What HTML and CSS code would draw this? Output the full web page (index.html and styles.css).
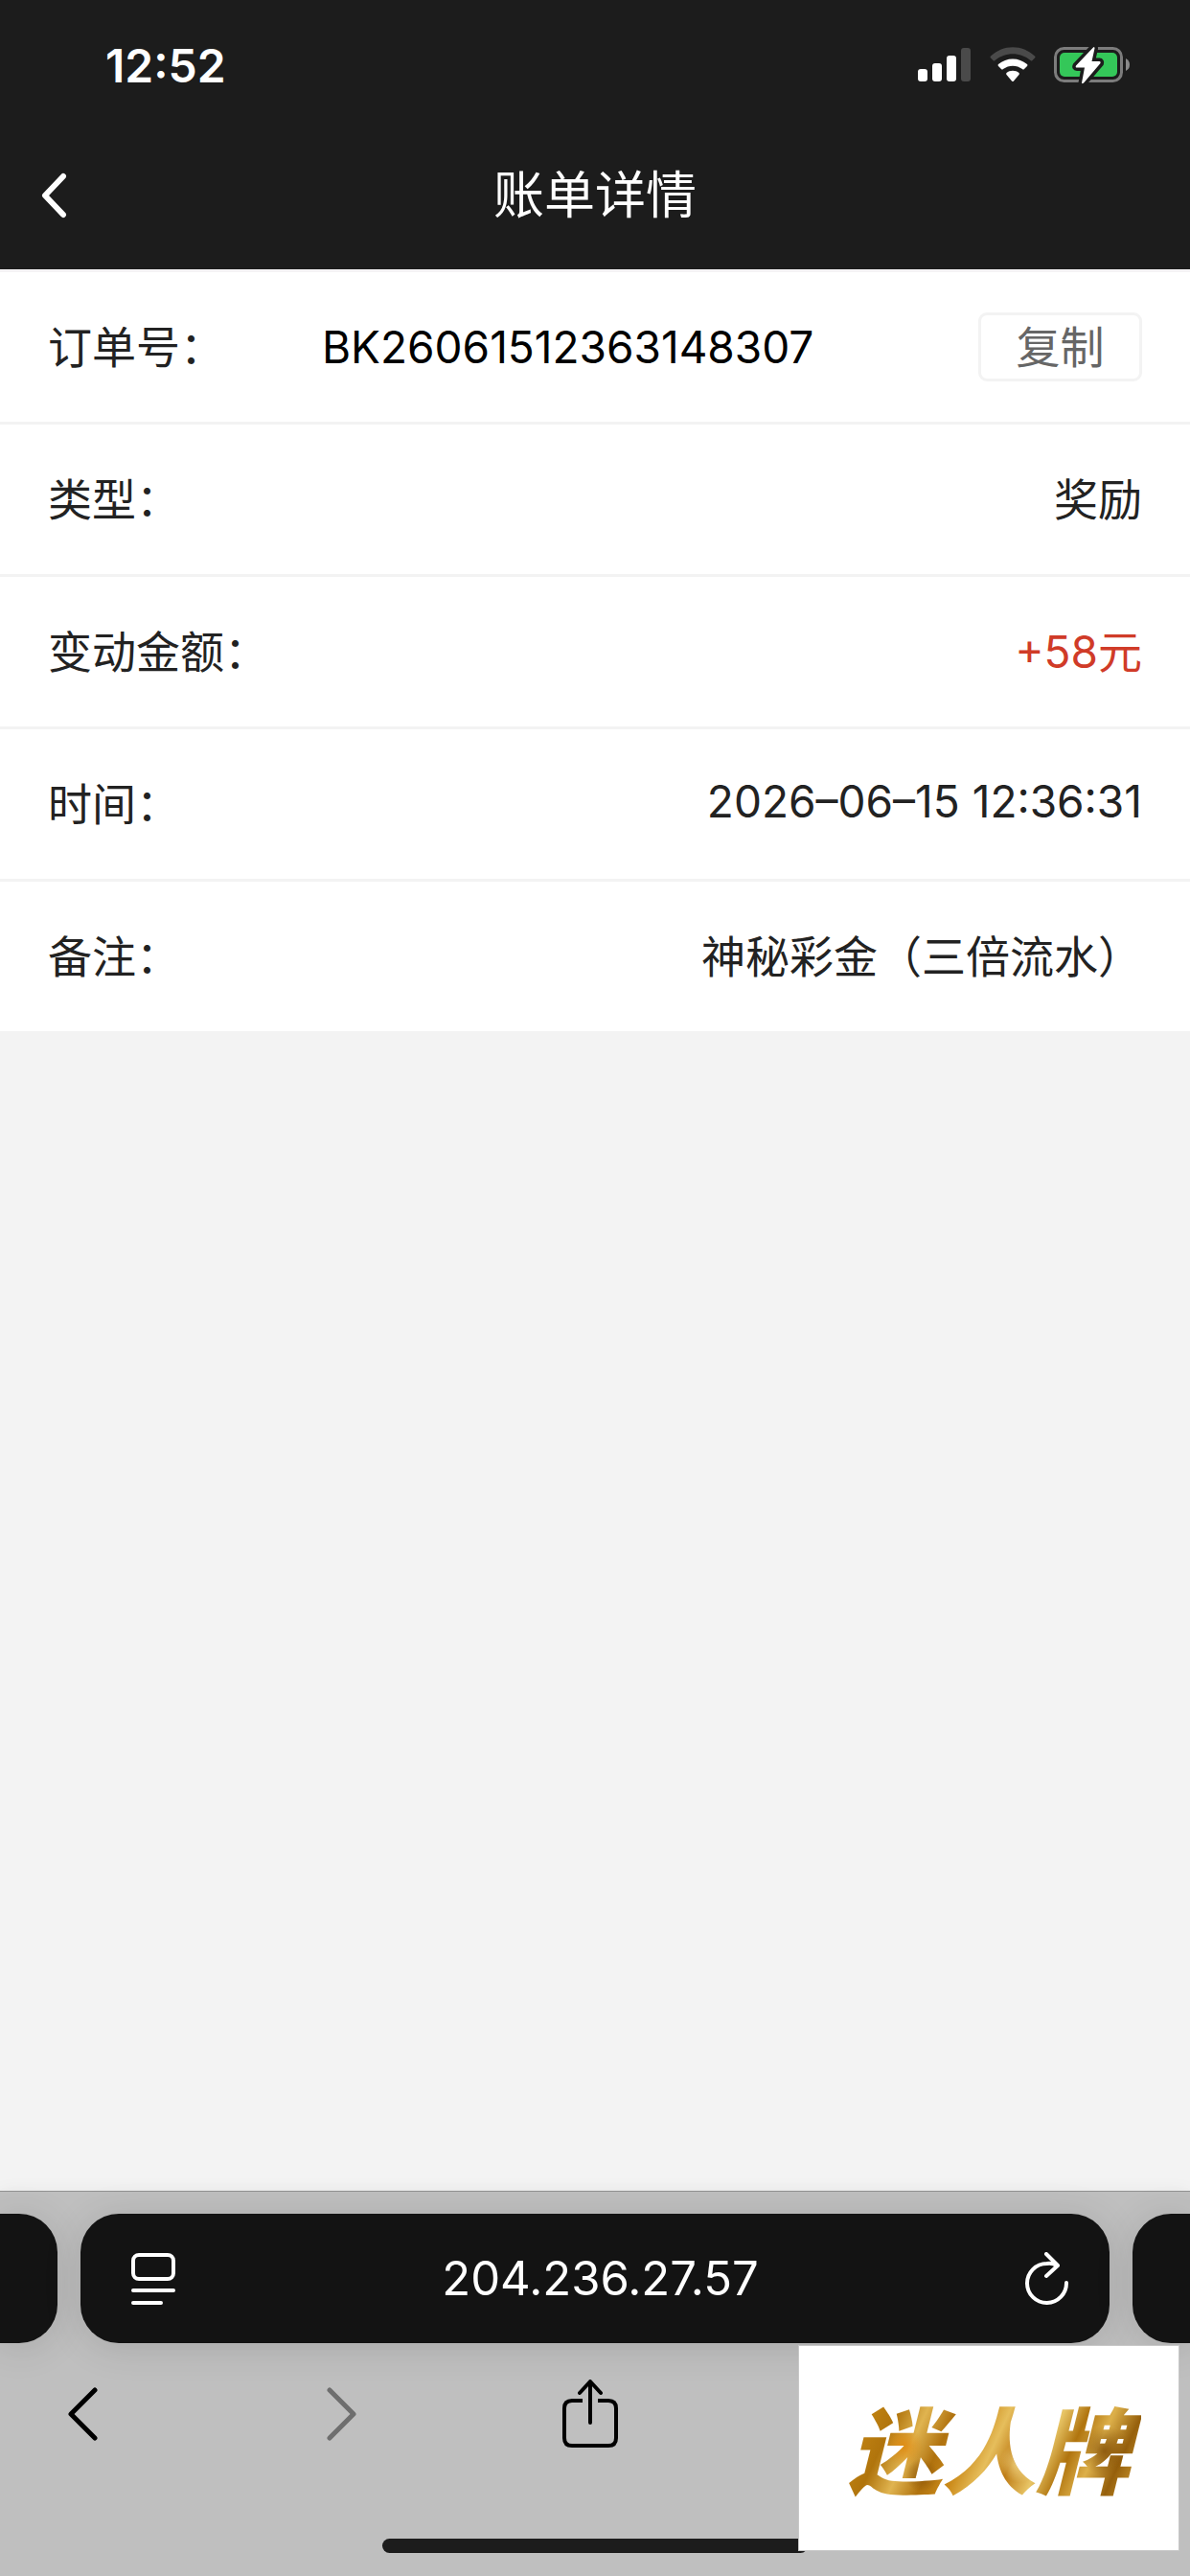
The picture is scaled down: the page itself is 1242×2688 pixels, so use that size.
FILE: index.html
```html
<!DOCTYPE html>
<html lang="zh-CN">
<head>
    <meta charset="UTF-8">
    <meta name="viewport" content="width=device-width, initial-scale=1.0">
    <title>账单详情</title>
    <link rel="stylesheet" href="styles.css">
</head>
<body>
    <!-- Status Bar -->
    <div class="status-bar">
        <span class="clock">12:52</span>
        <div class="status-icons">
            <svg width="56" height="40" viewBox="0 0 56 40" fill="#fff">
                <rect x="0" y="24" width="10" height="13" rx="3"/>
                <rect x="15" y="18" width="10" height="19" rx="3"/>
                <rect x="30" y="10" width="10" height="27" rx="3"/>
                <rect x="45" y="2" width="10" height="35" rx="3" fill="#4a4a4a"/>
            </svg>
            <svg width="48" height="40" viewBox="0 0 48 40" fill="#fff">
                <path d="M1 10.5C14-2 34-2 47 10.5Q48 11.500 47 12.500L44.500 15Q43.500 16 42.500 15C32 6 16 6 5.500 15Q4.500 16 3.500 15L1 12.500Q0 11.500 1 10.500Z" fill="#4a4a4a"/>
                <path d="M9 19C17.500 11.500 30.500 11.500 39 19Q40 20 39 21L36 24Q35 25 34 24C28 19.500 20 19.500 14 24Q13 25 12 24L9 21Q8 20 9 19Z"/>
                <path d="M17.500 28C21 25 27 25 30.500 28Q31.300 29 30.500 30L25 36.500Q24 37.500 23 36.500L17.500 30Q16.700 29 17.500 28Z"/>
            </svg>
            <svg width="80" height="40" viewBox="0 0 80 40">
                <rect x="1.500" y="2.500" width="69" height="34" rx="9" fill="none" stroke="#7c7c7c" stroke-width="3"/>
                <path d="M75 13Q79 15 79 19.500T75 26Z" fill="#8a8a8a"/>
                <rect x="6" y="7" width="60" height="25" rx="5" fill="#34c759"/>
                <path d="M41 1.500L23 20.500Q22 22.500 24 22.500H32L29 38.500Q30 40 31.500 38L48.500 18Q49 16 47.500 16H39.500L42.500 2.500Q42.500 0 41 1.500Z" fill="#fff" stroke="#1c1c1c" stroke-width="7" paint-order="stroke"/>
            </svg>
        </div>
    </div>

    <!-- Page Header -->
    <header class="header">
        <button class="back-button" aria-label="返回">
            <svg width="28" height="48" viewBox="0 0 28 48" fill="none" stroke="#fff" stroke-width="6" stroke-linecap="round" stroke-linejoin="round">
                <path d="M24 4L5 24L24 44"/>
            </svg>
        </button>
        <h1>账单详情</h1>
    </header>

    <!-- Bill Details -->
    <main class="content">
        <dl class="detail-list">
            <div class="detail-row order-row">
                <dt>订单号：</dt>
                <dd class="order-number">BK26061512363148307</dd>
                <dd><button class="copy-button">复制</button></dd>
            </div>
            <div class="detail-row">
                <dt>类型：</dt>
                <dd>奖励</dd>
            </div>
            <div class="detail-row">
                <dt>变动金额：</dt>
                <dd class="amount">+58元</dd>
            </div>
            <div class="detail-row">
                <dt>时间：</dt>
                <dd>2026–06–15 12:36:31</dd>
            </div>
            <div class="detail-row">
                <dt>备注：</dt>
                <dd>神秘彩金（三倍流水）</dd>
            </div>
        </dl>
    </main>

    <!-- Browser Bar -->
    <footer class="browser-bar">
        <div class="tabs">
            <div class="tab-edge tab-prev"></div>
            <div class="address-bar">
                <button aria-label="页面菜单">
                    <svg width="46" height="56" viewBox="0 0 46 56" fill="none" stroke="#fff" stroke-width="4" stroke-linecap="round">
                        <rect x="2" y="3" width="42" height="25" rx="6"/>
                        <path d="M2 40H44M2 53H31"/>
                    </svg>
                </button>
                <input type="text" value="204.236.27.57" aria-label="地址">
                <button aria-label="重新载入">
                    <svg width="46" height="56" viewBox="0 0 46 56" fill="none" stroke="#fff" stroke-width="4" stroke-linecap="round" stroke-linejoin="round">
                        <path d="M43 32A20.500 20.500 0 1 1 22.500 12Q28 11 33 14M22 2L34 14L22 25"/>
                    </svg>
                </button>
            </div>
            <div class="tab-edge tab-next"></div>
        </div>
        <nav class="toolbar">
            <button aria-label="后退">
                <svg width="32" height="56" viewBox="0 0 32 56" fill="none" stroke="#000" stroke-width="5" stroke-linecap="round" stroke-linejoin="round">
                    <path d="M28 3L3 28L28 53"/>
                </svg>
            </button>
            <button aria-label="前进" disabled>
                <svg width="32" height="56" viewBox="0 0 32 56" fill="none" stroke="#6e6e6e" stroke-width="5" stroke-linecap="round" stroke-linejoin="round">
                    <path d="M3 3L28 28L3 53"/>
                </svg>
            </button>
            <button aria-label="分享">
                <svg width="58" height="72" viewBox="0 0 58 72" fill="none" stroke="#000" stroke-width="4">
                    <path d="M21 22H10Q2 22 2 30V61Q2 69 10 69H48Q56 69 56 61V30Q56 22 48 22H37"/>
                    <path d="M29 45V3M18 14L29 2L40 14" stroke-linecap="round" stroke-linejoin="round"/>
                </svg>
            </button>
        </nav>
        <div class="home-indicator"></div>
        <div class="brand"><span>迷人牌</span></div>
    </footer>
</body>
</html>
```
FILE: styles.css
```css
* {
    box-sizing: border-box;
}

body {
    font-family: Inter, "Noto Sans CJK SC", sans-serif;
    font-size: 46px;
    margin: 0;
    color: #222;
    background-color: #f3f3f3;
    display: flex;
    flex-direction: column;
    min-height: 100vh;
}

button {
    font: inherit;
    color: inherit;
    background: none;
    border: none;
    padding: 0;
    cursor: pointer;
}

svg {
    display: block;
}

.status-bar {
    height: 136px;
    padding: 0 62px 0 110px;
    background-color: #1c1c1c;
    color: white;
    display: flex;
    align-items: center;
    justify-content: space-between;
}

.clock {
    font-size: 48px;
    font-weight: 600;
}

.status-icons {
    display: flex;
    gap: 19px;
}

.header {
    height: 148px;
    padding: 0 42px 10px;
    background-color: #1c1c1c;
    border-bottom: 3px solid #f5f3f5;
    color: white;
    display: grid;
    grid-template-columns: 1fr auto 1fr;
    align-items: center;
}

.header h1 {
    margin: 0;
    font-size: 53px;
    font-weight: 400;
    line-height: 80px;
}

.content {
    flex: 1;
}

.detail-list {
    margin: 0;
    background-color: white;
}

.detail-row {
    height: 159px;
    padding: 0 50px;
    border-bottom: 3px solid #f3f3f3;
    display: flex;
    align-items: center;
    justify-content: space-between;
}

.detail-row dt, .detail-row dd {
    margin: 0;
    padding-bottom: 6px;
}

.order-row dd {
    padding-bottom: 0;
}

.detail-row .order-number {
    margin-left: 102px;
    margin-right: auto;
    color: black;
}

.detail-row .amount {
    color: #d03b28;
}

.copy-button {
    display: block;
    width: 171px;
    height: 72px;
    border: 3px solid #f3f3f3;
    border-radius: 9px;
    color: #666;
    line-height: 60px;
}

/* Browser chrome */
.browser-bar {
    position: relative;
    height: 402px;
    padding-top: 23px;
    background-color: #bfbfbf;
    border-top: 1px solid #929292;
    box-shadow: 0 -2px 16px rgba(0, 0, 0, 0.04);
    overflow-x: clip;
    display: flex;
    flex-direction: column;
}

.tabs {
    display: flex;
    gap: 24px;
}

.tab-edge, .address-bar {
    height: 135px;
    background-color: #131313;
    box-shadow: 0 4px 40px rgba(0, 0, 0, 0.12);
}

.tab-edge {
    width: 60px;
}

.tab-prev {
    border-radius: 0 40px 40px 0;
}

.tab-next {
    border-radius: 40px 0 0 40px;
}

.address-bar {
    flex: 1;
    padding: 0 42px 0 53px;
    border-radius: 40px;
    display: flex;
    align-items: center;
}

.address-bar input {
    flex: 1;
    min-width: 0;
    padding: 0;
    background: none;
    border: none;
    color: white;
    font: inherit;
    font-size: 49px;
    text-align: center;
}

.toolbar {
    padding: 38px 0 0 71px;
    display: grid;
    grid-template-columns: 270fr 246fr 655fr;
    align-items: center;
    justify-items: start;
}

.home-indicator {
    width: 444px;
    height: 15px;
    margin: auto auto 24px;
    border-radius: 8px;
    background-color: #1c1c1c;
}

.brand {
    position: absolute;
    right: 11px;
    bottom: 26px;
    width: 398px;
    height: 215px;
    background-color: white;
    border: 1px solid #c8c8c8;
    display: flex;
    align-items: center;
    justify-content: center;
}

/* Gold foil lettering */
.brand span {
    padding: 0 12px 6px;
    font-family: "Noto Sans CJK SC", sans-serif;
    font-size: 98px;
    font-style: italic;
    font-weight: 900;
    line-height: 120px;
    color: transparent;
    background:
        radial-gradient(circle at 22% 48%, rgba(224, 138, 16, 0.9), transparent 8%),
        radial-gradient(circle at 88% 52%, rgba(130, 78, 6, 0.8), transparent 9%),
        radial-gradient(circle at 28% 72%, rgba(130, 78, 6, 0.7), transparent 7%),
        radial-gradient(circle at 60% 62%, rgba(245, 220, 140, 0.9), transparent 10%),
        linear-gradient(115deg, #a56c08 4%, #c08212 12%, #b0740c 20%, #e0b450 28%, #b0720e 36%, #cc8c1c 44%, #e6be5c 51%, #bd7a14 58%, #e8c566 66%, #b0740e 73%, #ddb04a 80%, #96600c 88%, #cc9830 96%);
    -webkit-background-clip: text;
    background-clip: text;
}
```
